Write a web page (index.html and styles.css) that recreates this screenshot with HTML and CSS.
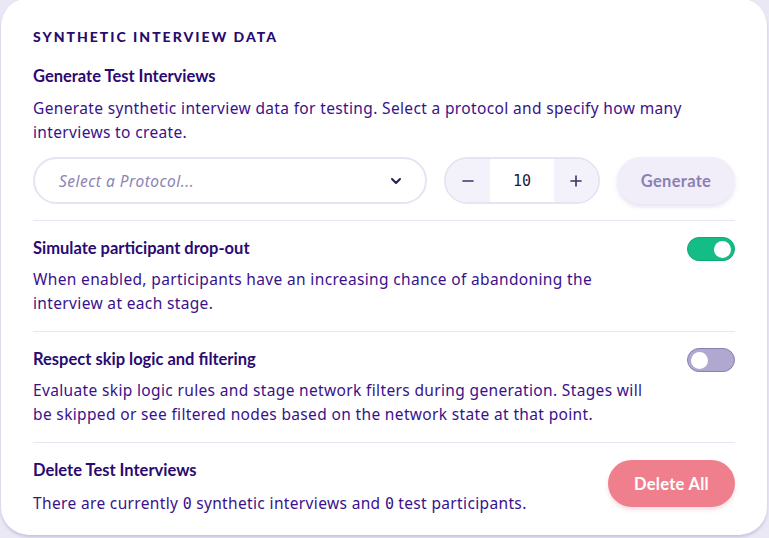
FILE: index.html
```html
<!DOCTYPE html>
<html>
<head>
<meta charset="utf-8">
<link rel="stylesheet" href="styles.css">
</head>
<body>
<div class="card">
  <h2 class="title">SYNTHETIC INTERVIEW DATA</h2>

  <section class="section first">
    <h3 class="heading">Generate Test Interviews</h3>
    <p class="desc">Generate synthetic interview data for testing. Select a protocol and specify how many interviews to create.</p>
    <div class="controls">
      <div class="select">
        <span class="placeholder">Select a Protocol...</span>
        <svg class="chev" width="14" height="14" viewBox="0 0 14 14"><path d="M3 5l4 4 4-4" fill="none" stroke="#241f4f" stroke-width="2" stroke-linecap="round" stroke-linejoin="round"/></svg>
      </div>
      <div class="stepper">
        <span class="step"><svg width="14" height="14" viewBox="0 0 14 14"><path d="M2 7h10" stroke="#3b3566" stroke-width="1.6" stroke-linecap="round"/></svg></span>
        <span class="value">10</span>
        <span class="step"><svg width="14" height="14" viewBox="0 0 14 14"><path d="M2 7h10M7 2v10" stroke="#3b3566" stroke-width="1.6" stroke-linecap="round"/></svg></span>
      </div>
      <button class="btn gen">Generate</button>
    </div>
  </section>

  <section class="section row">
    <div class="text">
      <h3 class="heading">Simulate participant drop-out</h3>
      <p class="desc">When enabled, participants have an increasing chance of abandoning the interview at each stage.</p>
    </div>
    <span class="toggle on"><span class="knob"></span></span>
  </section>

  <section class="section row">
    <div class="text">
      <h3 class="heading">Respect skip logic and filtering</h3>
      <p class="desc">Evaluate skip logic rules and stage network filters during generation. Stages will be skipped or see filtered nodes based on the network state at that point.</p>
    </div>
    <span class="toggle off"><span class="knob"></span></span>
  </section>

  <section class="section row center">
    <div class="text">
      <h3 class="heading">Delete Test Interviews</h3>
      <p class="desc">There are currently <span class="mono">0</span> synthetic interviews and <span class="mono">0</span> test participants.</p>
    </div>
    <button class="btn del">Delete All</button>
  </section>
</div>
</body>
</html>
```
FILE: styles.css
```css
* { box-sizing: border-box; }
html, body { margin: 0; padding: 0; }
body {
  background: #ebe8f6;
  width: 769px;
  height: 538px;
  overflow: hidden;
  font-family: "Lato", "Noto Sans", sans-serif;
  color: #2d0c78;
}
.card {
  background: #ffffff;
  margin: -2px 2px 0 1px;
  height: 537px;
  border-radius: 28px;
  padding: 31px 32px 0 32px;
  box-shadow: 0 2px 3px rgba(90, 70, 160, 0.25);
}
.title {
  margin: 0;
  font-size: 14px;
  font-weight: 900;
  letter-spacing: 2px;
  line-height: 16px;
  color: #2a0a70;
}
.section {
  border-top: 1px solid #e9e6f4;
  padding: 17px 0 16px 0;
}
.section.first {
  border-top: none;
  padding-top: 21px;
  padding-bottom: 16px;
}
.heading {
  margin: 0;
  font-size: 16.5px;
  font-weight: 700;
  line-height: 20px;
  color: #2a0a70;
}
.desc {
  margin: 10px 0 0 0;
  font-family: "Noto Sans", sans-serif;
  font-size: 15.5px;
  line-height: 24px;
  letter-spacing: 0.35px;
  color: #3a118c;
}
.row .desc { max-width: 620px; margin-top: 9px; }
.row.center .desc { margin-top: 11px; }
.mono { font-family: "DejaVu Sans Mono", monospace; font-size: 15px; letter-spacing: 0; }
.controls {
  display: flex;
  align-items: center;
  gap: 17px;
  margin-top: 13px;
}
.select {
  flex: 0 0 394px;
  height: 47px;
  border: 2px solid #e6e3f3;
  border-radius: 24px;
  display: flex;
  align-items: center;
  justify-content: space-between;
  padding: 0 22px 0 24px;
}
.placeholder {
  font-family: "Noto Sans", sans-serif;
  font-style: italic;
  font-size: 15.5px;
  letter-spacing: 0.5px;
  color: #8d84b6;
}
.chev { display: block; }
.stepper {
  flex: 0 0 156px;
  height: 47px;
  border: 2px solid #e6e3f3;
  border-radius: 24px;
  display: flex;
  overflow: hidden;
}
.step {
  flex: 0 0 44px;
  background: #f3f1fa;
  display: flex;
  align-items: center;
  justify-content: center;
}
.value {
  flex: 1;
  background: #fff;
  display: flex;
  align-items: center;
  justify-content: center;
  font-family: "DejaVu Sans Mono", monospace;
  font-size: 15px;
  color: #1f1a3d;
}
.btn {
  border: none;
  border-radius: 24px;
  font-family: "Lato", sans-serif;
  font-weight: 700;
  font-size: 16.5px;
  letter-spacing: 0.3px;
  cursor: pointer;
}
.gen {
  width: 119px;
  height: 47px;
  background: #f1eefa;
  color: #8a80b3;
  box-shadow: 0 3px 4px rgba(120, 100, 190, 0.18);
}
.row {
  display: flex;
  justify-content: space-between;
  align-items: flex-start;
}
.row .text { flex: 1; }
.row.center { align-items: center; }
.toggle {
  flex: 0 0 48px;
  width: 48px;
  height: 24px;
  border-radius: 12px;
  display: flex;
  align-items: center;
  padding: 0 3px;
  margin-top: -1px;
}
.toggle .knob {
  width: 17px;
  height: 17px;
  border-radius: 50%;
  background: #fff;
}
.toggle.on {
  background: #14bd86;
  border: 1px solid #0fa877;
  justify-content: flex-end;
}
.toggle.off {
  background: #b0a8cf;
  border: 1px solid #8a80b3;
  justify-content: flex-start;
}
.del {
  width: 127px;
  height: 47px;
  margin-top: -9px;
  background: #f07f8d;
  color: #fff;
  box-shadow: 0 3px 4px rgba(200, 90, 110, 0.18);
}
```
